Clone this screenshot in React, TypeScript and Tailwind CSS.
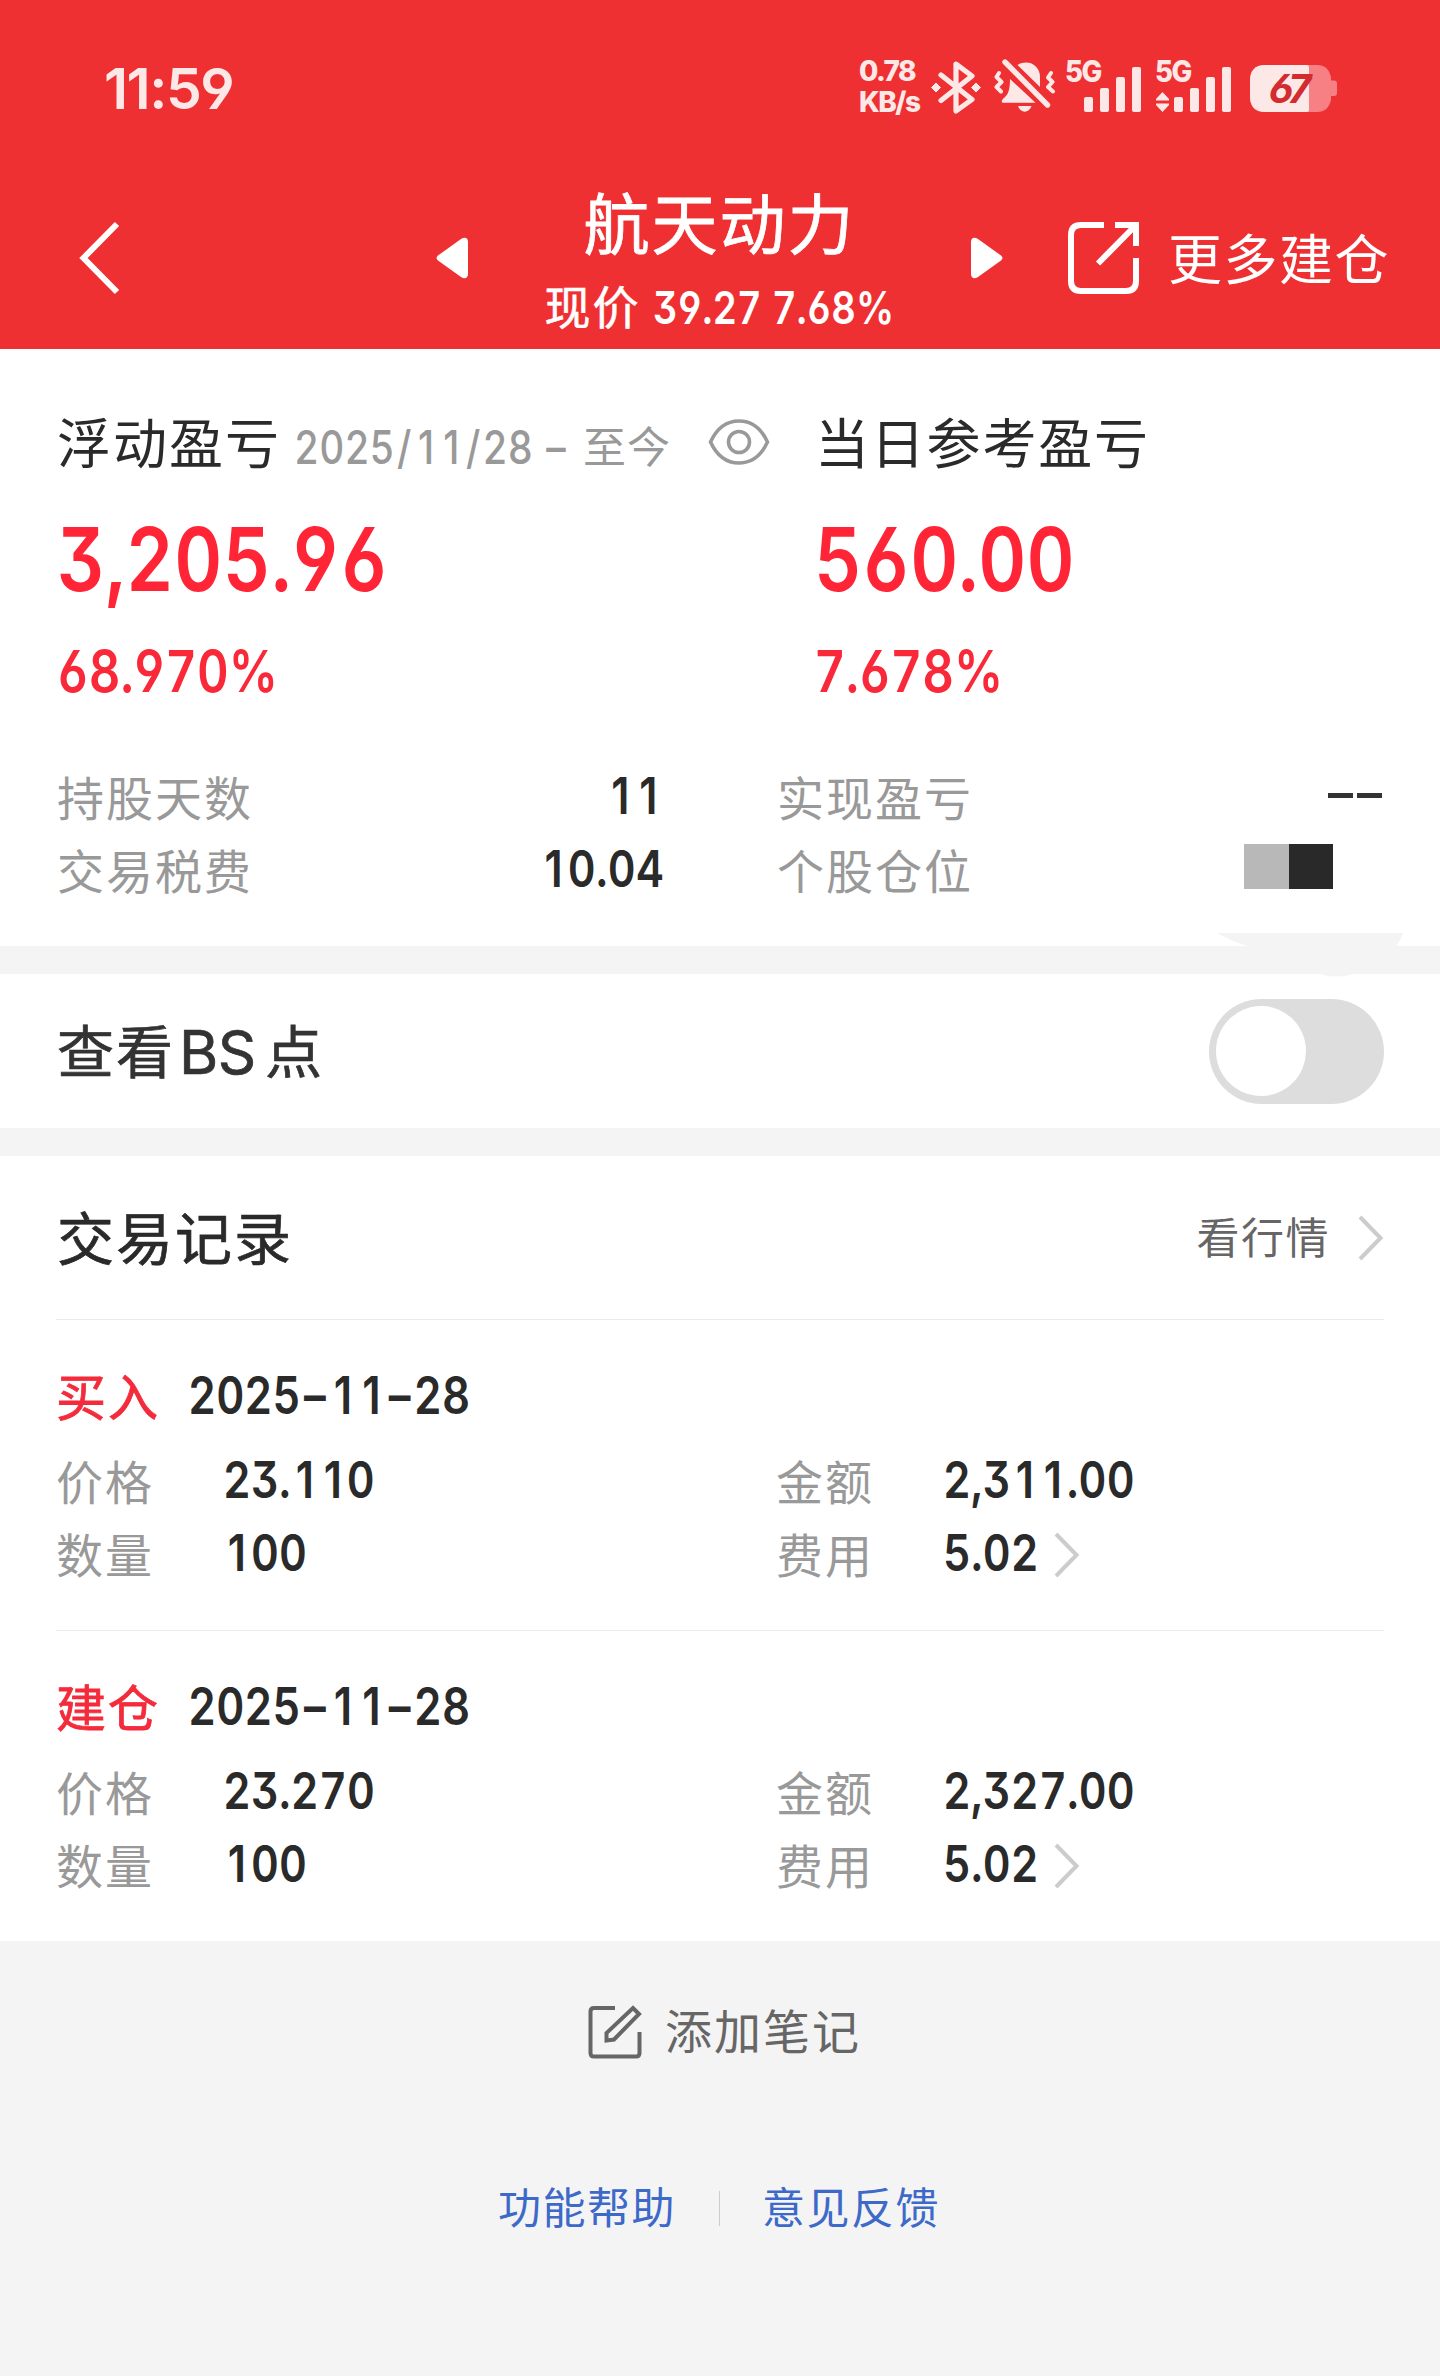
import type { ReactNode } from 'react';
import clsx from 'clsx';

type Trade = {
    type: string;
    date: string;
    price: string;
    quantity: string;
    amount: string;
    fee: string;
};

const trades: Trade[] = [
    { type: '买入', date: '2025–11–28', price: '23.110', quantity: '100', amount: '2,311.00', fee: '5.02' },
    { type: '建仓', date: '2025–11–28', price: '23.270', quantity: '100', amount: '2,327.00', fee: '5.02' },
];

// Characters that get a fixed cell instead of their own width
const cells: Record<string, string> = {
    '1': 'w-[0.65em]',
    '–': 'w-[0.65em]',
    '/': 'w-[0.48em]',
};

// Narrow tabular figures with straight 6/9 and flat-top 3
function Num({ value, className }: { value: string; className?: string }) {
    return (
        <span
            className={clsx(
                'inline-block whitespace-nowrap leading-none scale-x-[0.845] [font-feature-settings:"tnum","cv03","cv04","cv09"]',
                className
            )}
        >
            {value.split('').map((char, i) =>
                cells[char] ? (
                    <span key={i} className={clsx('inline-block text-center [font-feature-settings:normal]', cells[char])}>
                        {char}
                    </span>
                ) : (
                    char
                )
            )}
        </span>
    );
}

function SignalBars() {
    return (
        <svg width="57" height="45" viewBox="0 0 57 45" fill="#fde8e8">
            <rect x="0" y="30" width="9" height="15" rx="2" />
            <rect x="16" y="21" width="9" height="24" rx="2" />
            <rect x="32" y="10" width="9" height="35" rx="2" />
            <rect x="48" y="0" width="9" height="45" rx="2" />
        </svg>
    );
}

function Chevron() {
    return (
        <svg className="shrink-0" width="26" height="46" viewBox="0 0 26 46" fill="none" stroke="#cccccc" strokeWidth="4">
            <path d="M2 2L22.5 23L2 44" />
        </svg>
    );
}

function StatusBar() {
    return (
        <div className="flex h-[176px] items-center justify-between pl-[104px] pr-[102px] text-[#fde8e8]">
            <span className="text-[57px] font-semibold leading-none tracking-[-1.500px] [font-feature-settings:'cv04']">11:59</span>
            <div className="flex items-center">
                <div className="mb-[2px] flex w-[62px] flex-col text-[28px] font-extrabold leading-[31px] tracking-[-1.500px]">
                    <span className="whitespace-nowrap">0.78</span>
                    <span className="whitespace-nowrap">KB/s</span>
                </div>
                <svg className="mb-[2px] ml-[9px]" width="52" height="54" viewBox="0 0 52 54" fill="none">
                    <path d="M11 15L42 39.5L26 51V4L42 16L11 40.5" stroke="#fde8e8" strokeWidth="5.2" strokeLinecap="round" strokeLinejoin="round" />
                    <path d="M6 23L10.5 27.5L6 32L1.5 27.5ZM46 23L50.5 27.5L46 32L41.5 27.5Z" fill="#fde8e8" stroke="#fde8e8" strokeWidth="1" strokeLinejoin="round" />
                </svg>
                <svg className="mb-[4px] ml-[11px]" width="64" height="56" viewBox="0 0 64 56" fill="none">
                    <path d="M12 4L54.5 47" stroke="#fde8e8" strokeWidth="5.4" strokeLinecap="round" />
                    <path d="M24.5 7C36 .5 47 8 47 19V29Z" fill="#fde8e8" />
                    <path d="M17 21L42.5 44.8H11C7.5 44.8 8.5 42 11.5 39.5C15 36.5 17 32 17 21Z" fill="#fde8e8" />
                    <path d="M25 48H38.5C36 55.5 27.5 55.5 25 48Z" fill="#fde8e8" />
                    <path d="M6 15L3.5 19L8.5 24L3.5 29L8 33.500M58 15L55 19.500L59.5 24L55 29L60 33.500" stroke="#fde8e8" strokeWidth="4" strokeLinecap="round" strokeLinejoin="round" />
                </svg>
                <div className="relative mb-[5px] ml-[8px] h-[52px] w-[76px]">
                    <span className="absolute left-0 top-0 origin-left scale-x-[0.92] text-[30px] font-extrabold leading-[22px] tracking-[-1.500px]">5G</span>
                    <div className="absolute bottom-0 right-0">
                        <SignalBars />
                    </div>
                </div>
                <div className="relative mb-[5px] ml-[14px] h-[52px] w-[76px]">
                    <span className="absolute left-0 top-0 origin-left scale-x-[0.92] text-[30px] font-extrabold leading-[22px] tracking-[-1.500px]">5G</span>
                    <svg className="absolute bottom-0 left-[1px]" width="13" height="20" viewBox="0 0 13 20" fill="#fde8e8">
                        <path d="M6.500 0L13 7V8.500H0V7ZM6.500 20L13 13V11.500H0V13Z" />
                    </svg>
                    <div className="absolute bottom-0 right-0">
                        <SignalBars />
                    </div>
                </div>
                <div className="relative ml-[19px] h-[47px] w-[88px]">
                    <svg width="88" height="47" viewBox="0 0 88 47">
                        <path d="M15 0H67C75 0 79 4 81 12V15.500H84C86 15.500 87 16.500 87 18.500V28C87 30 86 31 84 31H81V35C79 43 75 47 67 47H15C5 47 0 41 0 32V15C0 6 5 0 15 0Z" fill="#f68084" />
                        <path d="M15 0H57Q59 0 59 2V45Q59 47 57 47H15C5 47 0 41 0 32V15C0 6 5 0 15 0Z" fill="#fde8e8" />
                    </svg>
                    <span className="absolute left-[19px] top-[4px] text-[40px] font-bold italic leading-[40px] tracking-[-4px] text-[#d22b30] [font-feature-settings:'cv03']">67</span>
                </div>
            </div>
        </div>
    );
}

function NavBar() {
    return (
        <div className="flex h-[164px] items-center text-white">
            <svg className="ml-[79px] shrink-0" width="42" height="74" viewBox="0 0 42 74" fill="none" stroke="white" strokeWidth="6">
                <path d="M38 3L4.500 37L38 71" />
            </svg>
            <svg className="ml-[315px] shrink-0" width="32" height="42" viewBox="0 0 32 42" fill="white">
                <path d="M2 18.500L25 2C29 -.5 32 1 32 5V37C32 41 29 42.500 25 40L2 23.500Q-1 21 2 18.500Z" />
            </svg>
            <div className="flex h-[164px] w-[503px] shrink-0 flex-col items-center">
                <h1 className="mt-[8px] h-[83px] whitespace-nowrap text-[66px] leading-[83px] tracking-[2px] [-webkit-text-stroke:0.8px]">航天动力</h1>
                <div className="mt-[7px] flex h-[66px] w-[350px] items-center">
                    <span className="w-[108px] shrink-0 whitespace-nowrap text-[46px] leading-none tracking-[2px] [-webkit-text-stroke:0.6px]">现价</span>
                    <Num className="shrink-0 origin-left text-[45px] font-semibold" value="39.27 7.68%" />
                </div>
            </div>
            <svg className="shrink-0" width="32" height="42" viewBox="0 0 32 42" fill="white">
                <path d="M30 18.500L7 2C3 -.5 0 1 0 5V37C0 41 3 42.500 7 40L30 23.500Q33 21 30 18.500Z" />
            </svg>
            <svg className="ml-[65px] shrink-0" width="72" height="72" viewBox="0 0 72 72" fill="none" stroke="white" strokeWidth="6">
                <path d="M36 3H13Q3 3 3 13V59Q3 69 13 69H58Q68 69 68 59V36M47 3H68V24M67 4L30 41.500" />
            </svg>
            <span className="ml-[28px] whitespace-nowrap pt-[5px] text-[54px] leading-none tracking-[1.500px]">更多建仓</span>
        </div>
    );
}

function StatRow({ label, children }: { label: string; children: ReactNode }) {
    return (
        <div className="flex h-[73px] items-center justify-between">
            <span className="whitespace-nowrap pt-[2px]">{label}</span>
            {children}
        </div>
    );
}

function Summary() {
    return (
        <section className="h-[597px] bg-white px-[57px] pt-[53px]">
            <div className="flex h-[80px] items-center whitespace-nowrap">
                <span className="w-[237px] shrink-0 pt-[5px] text-[54px] leading-none tracking-[2px] text-[#2a2a2a]">浮动盈亏</span>
                <span className="flex w-[414px] shrink-0 items-center pt-[11px] text-[#999999]">
                    <span className="w-[289px] shrink-0 pb-[2px] leading-none">
                        <Num className="origin-left text-[46px] font-medium" value="2025/11/28 –" />
                    </span>
                    <span className="text-[43px] leading-none tracking-[1px]">至今</span>
                </span>
                <svg className="shrink-0" width="62" height="46" viewBox="0 0 62 46" fill="none" stroke="#999999" strokeWidth="3.600">
                    <path d="M2.500 23C9 9 19 2 31 2S53 9 59.500 23C53 37 43 44 31 44S9 37 2.500 23Z" />
                    <circle cx="31" cy="23" r="10.500" />
                </svg>
                <span className="ml-[45px] pt-[5px] text-[54px] leading-none tracking-[1.800px] text-[#2a2a2a]">当日参考盈亏</span>
            </div>
            <div className="mt-[27px] flex h-[100px] items-center text-[#ff2537]">
                <div className="w-[757px]">
                    <Num className="origin-left text-[88px] font-semibold tracking-[0.400px]" value="3,205.96" />
                </div>
                <Num className="origin-left text-[88px] font-semibold" value="560.00" />
            </div>
            <div className="mt-[30px] flex h-[64px] items-center text-[#fa2939]">
                <div className="w-[757px]">
                    <Num className="origin-left text-[58px] font-semibold" value="68.970%" />
                </div>
                <Num className="origin-left text-[58px] font-semibold" value="7.678%" />
            </div>
            <div className="mt-[58px] grid grid-cols-[607px_606px] gap-x-[113px] text-[47px] leading-none tracking-[2px] text-[#999999]">
                <StatRow label="持股天数">
                    <Num className="origin-right pb-[4px] pr-[2px] text-[51px] font-semibold tracking-[0.300px] text-[#2a2a2a]" value="11" />
                </StatRow>
                <StatRow label="实现盈亏">
                    <span className="flex gap-[4px] pb-[4px] pr-[1px]">
                        <i className="h-[5px] w-[25px] bg-[#333333]" />
                        <i className="h-[5px] w-[25px] bg-[#333333]" />
                    </span>
                </StatRow>
                <StatRow label="交易税费">
                    <Num className="origin-right pb-[4px] text-[51px] font-semibold tracking-[0.300px] text-[#2a2a2a]" value="10.04" />
                </StatRow>
                <StatRow label="个股仓位">
                    <span className="mb-[8px] mr-[50px] flex h-[45px] w-[89px]">
                        <i className="flex-1 bg-[#b8b8b8]" />
                        <i className="flex-1 bg-[#292929]" />
                    </span>
                </StatRow>
            </div>
        </section>
    );
}

function Field({ label, value, arrow }: { label: string; value: string; arrow?: boolean }) {
    return (
        <div className="flex h-[73px] items-center">
            <span className="w-[167px] shrink-0 pt-[2px] text-[47px] leading-none tracking-[2px] text-[#999999]">{label}</span>
            <span className={clsx('pb-[4px] leading-none', arrow && 'w-[111px] shrink-0')}>
                <Num className="origin-left text-[51px] font-semibold tracking-[0.200px] text-[#2a2a2a]" value={value} />
            </span>
            {arrow && <Chevron />}
        </div>
    );
}

function TradeItem({ trade }: { trade: Trade }) {
    return (
        <div className="h-[311px] border-t border-[#ebebeb] pt-[53px]">
            <div className="flex h-[49px] items-center">
                <span className="w-[132px] shrink-0 text-[50px] leading-none tracking-[2px] text-[#f32b3b] [-webkit-text-stroke:0.8px]">{trade.type}</span>
                <Num className="origin-left pb-[4px] text-[51.500px] font-semibold text-[#2a2a2a]" value={trade.date} />
            </div>
            <div className="mt-[23px] grid grid-cols-[720px_1fr]">
                <Field label="价格" value={trade.price} />
                <Field label="金额" value={trade.amount} />
                <Field label="数量" value={trade.quantity} />
                <Field label="费用" value={trade.fee} arrow />
            </div>
        </div>
    );
}

export default function App() {
    return (
        <div className="h-[2376px] w-[1440px] overflow-hidden bg-[#f4f4f4] font-['Inter','Noto_Sans_CJK_SC',sans-serif]">
            <header className="h-[349px] bg-[#ef3032]">
                <StatusBar />
                <NavBar />
            </header>

            <Summary />

            <div className="relative h-[28px]">
                <svg className="absolute left-[1216px] top-[-13px]" width="188" height="44" viewBox="0 0 188 44" fill="#f4f4f4">
                    <path d="M1 0H187Q185 7 180 13L137 41Q120 46 104 41L31 13Q15 8 1 0Z" />
                </svg>
            </div>

            <section className="flex h-[154px] items-center justify-between bg-white pl-[57px] pr-[56px]">
                <span className="flex items-center whitespace-nowrap pt-[3px] text-[57px] leading-none tracking-[2px] text-[#333333] [-webkit-text-stroke:0.7px]">
                    查看
                    <span className="ml-[4px] w-[86px] pb-[2px] text-[60px] tracking-[-0.500px]">BS</span>
                    点
                </span>
                <button type="button" className="h-[105px] w-[175px] rounded-full bg-[#dddddd] p-[7px]">
                    <span className="block size-[90px] rounded-full bg-white" />
                </button>
            </section>

            <section className="mt-[28px] h-[785px] bg-white px-[56px]">
                <div className="flex h-[163px] items-center justify-between">
                    <h2 className="pl-px pt-[3px] text-[57px] leading-none tracking-[2px] text-[#2a2a2a] [-webkit-text-stroke:0.7px]">交易记录</h2>
                    <div className="flex items-center text-[43px] leading-none tracking-[1.500px] text-[#666666]">
                        <span className="mr-[28px] pt-px">看行情</span>
                        <Chevron />
                    </div>
                </div>
                {trades.map((trade) => (
                    <TradeItem key={trade.type} trade={trade} />
                ))}
            </section>

            <div className="mt-[64px] flex h-[54px] items-center pl-[588px] text-[47px] leading-none tracking-[2px] text-[#666666]">
                <svg className="mr-[23px]" width="54" height="54" viewBox="0 0 54 54" fill="none" stroke="#666666" strokeWidth="4">
                    <path d="M27 3H6Q2.500 3 2.500 6.500V48Q2.500 51.500 6 51.500H48Q51.500 51.500 51.500 48V27" />
                    <path d="M18.500 35.500V28L45 3L51 9L26 34.500Z" />
                </svg>
                <span className="pb-[2px]">添加笔记</span>
            </div>

            <div className="mt-[124px] flex h-[50px] items-center pl-[498px] text-[43px] leading-none tracking-[1.500px] text-[#3d69c9]">
                <span className="w-[221px]">功能帮助</span>
                <span className="h-[35px] w-px bg-[#cccccc]" />
                <span className="ml-[42px]">意见反馈</span>
            </div>
        </div>
    );
}
